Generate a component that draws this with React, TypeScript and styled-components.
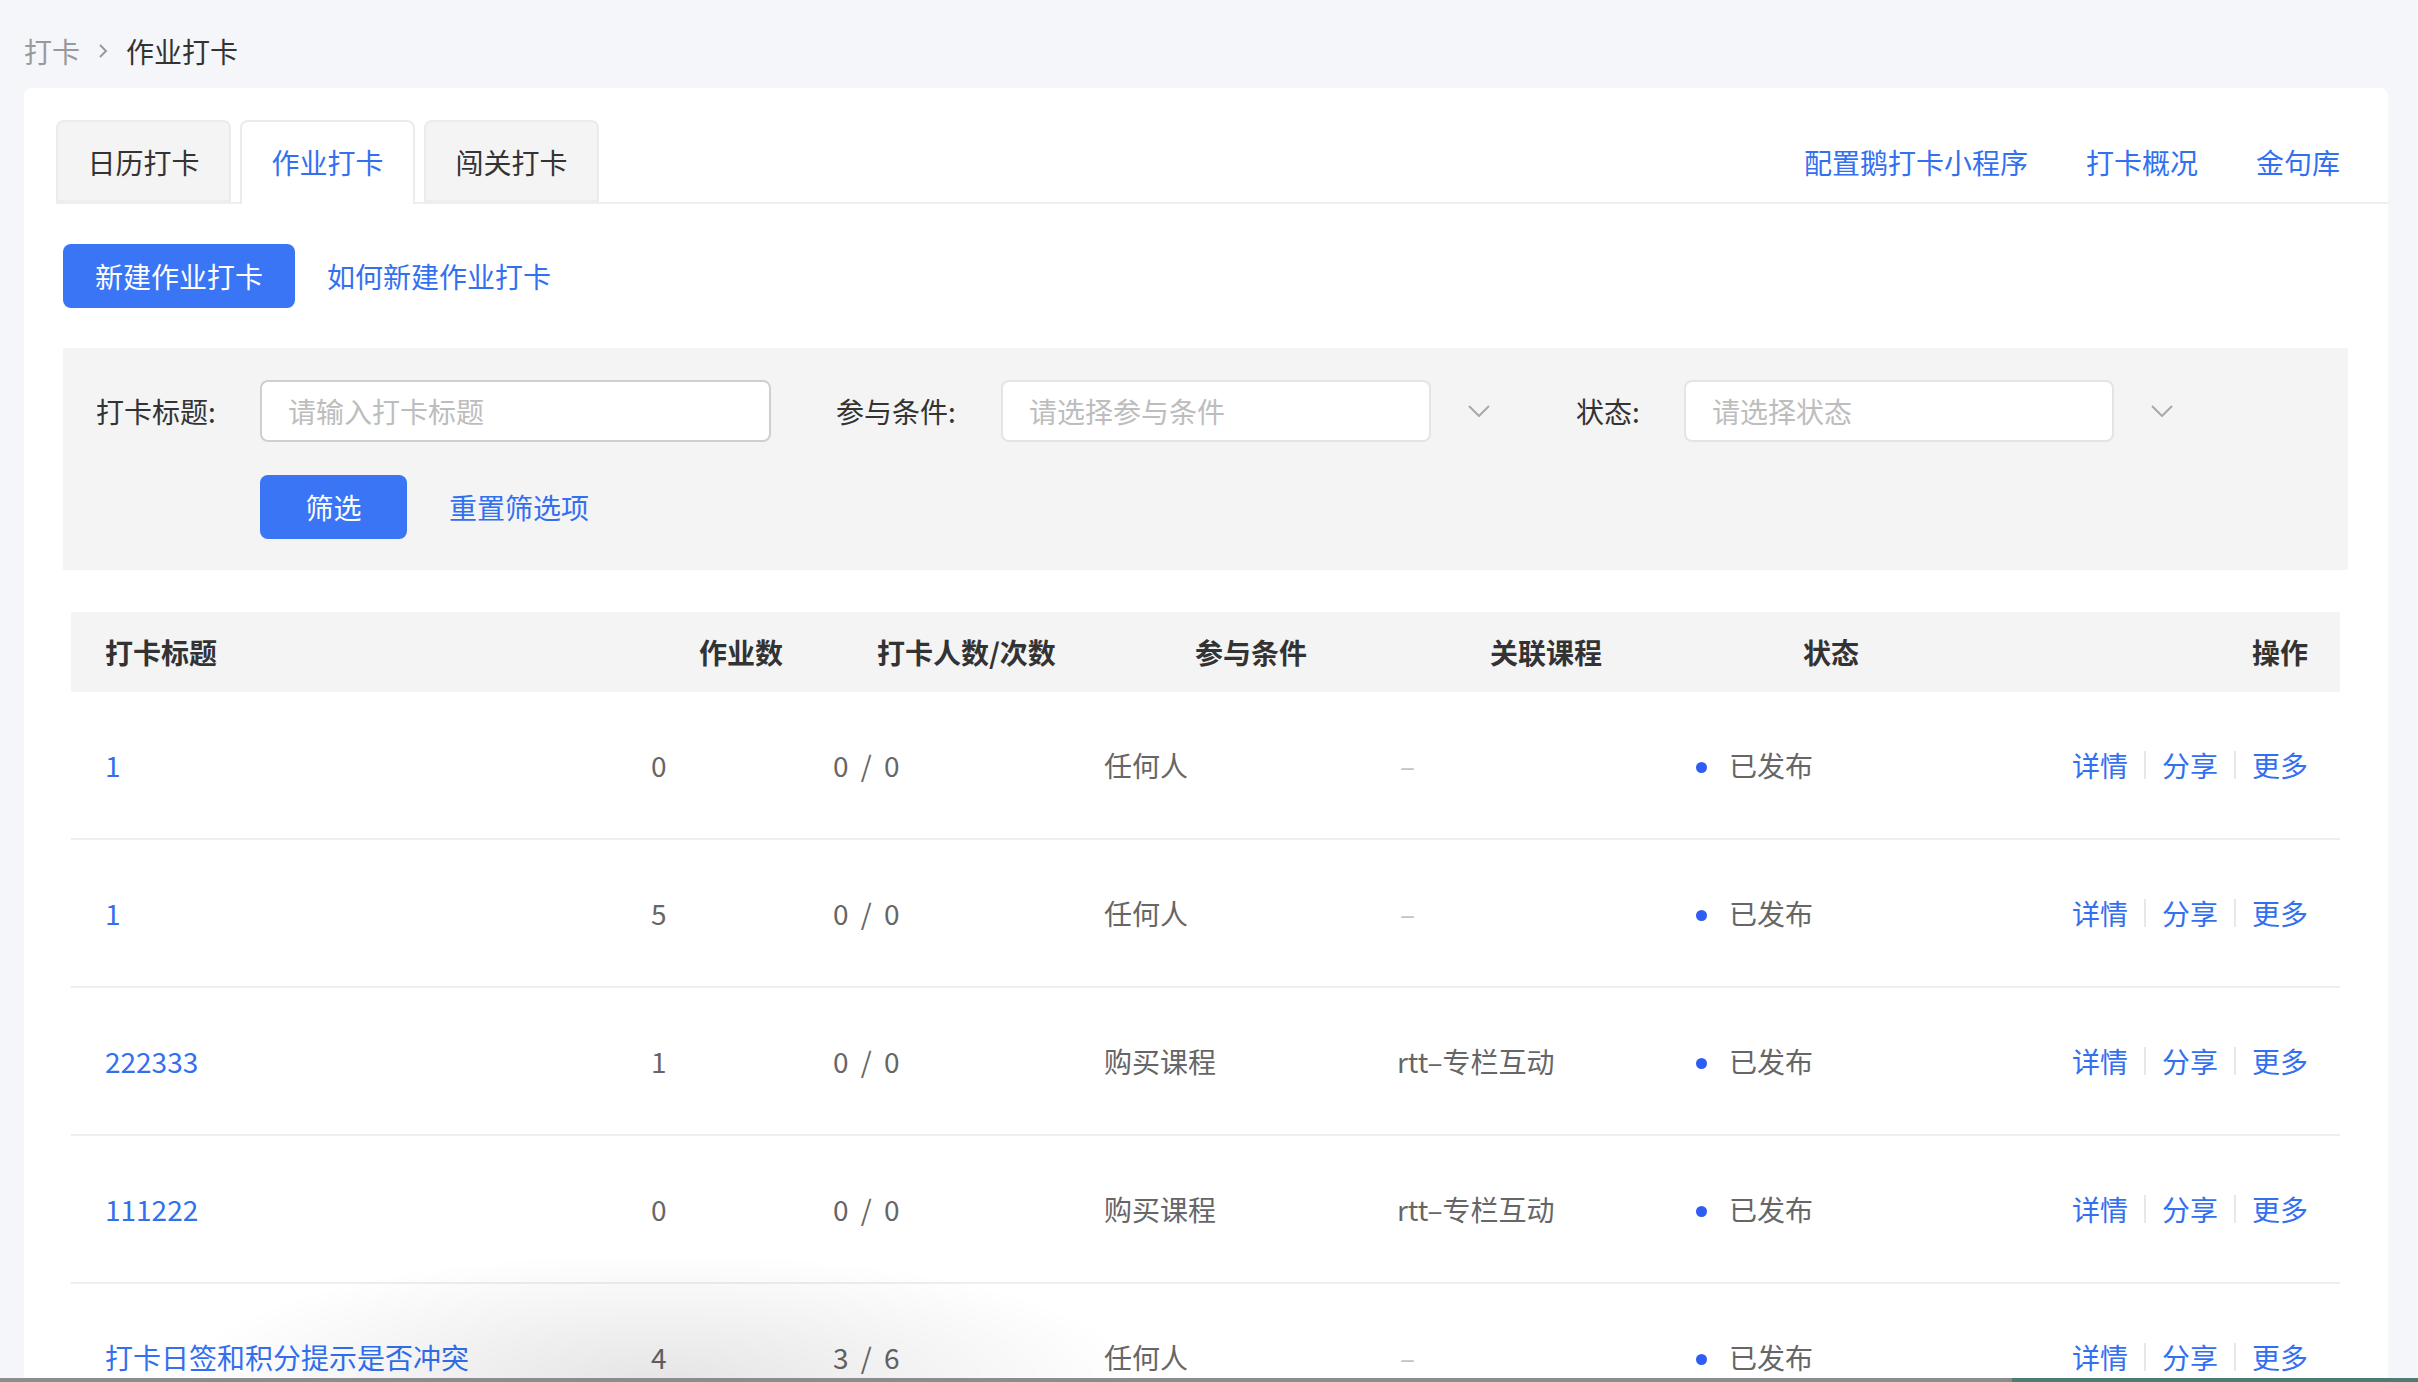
import styled, {createGlobalStyle} from "styled-components";

const GlobalStyle = createGlobalStyle`
  html, body {
    margin: 0;
    padding: 0;
    background: #f5f6f9;
    height: 1382px;
    overflow: hidden;
  }
  body {
    font-family: "Noto Sans CJK SC", "Noto Sans", sans-serif;
    font-size: 28px;
    color: #333;
  }
  * {
    box-sizing: border-box;
  }
`;

const Page = styled.div`
  padding: 0 30px 0 24px;
`;

const Crumbs = styled.div`
  height: 88px;
  padding-top: 14px;
  display: flex;
  align-items: center;
  gap: 18px;
  font-size: 28px;
`;

const Crumb = styled.span<{$current?: boolean}>`
  color: ${(p) => (p.$current ? "#333" : "#999")};
`;

const Card = styled.div`
  background: #fff;
  border-radius: 8px 8px 0 0;
  padding-top: 32px;
  min-height: 1400px;
`;

const TabBar = styled.div`
  display: flex;
  align-items: flex-end;
  margin-left: 32px;
  border-bottom: 2px solid #eeeeee;
`;

const Tabs = styled.div`
  display: flex;
  gap: 9px;
`;

const Tab = styled.div<{$active?: boolean}>`
  width: 175px;
  display: flex;
  align-items: center;
  justify-content: center;
  margin-bottom: -2px;
  border: 2px solid #ebebeb;
  border-bottom: none;
  border-radius: 8px 8px 0 0;
  background: ${(p) => (p.$active ? "#fff" : "#f4f4f4")};
  color: ${(p) => (p.$active ? "#3370f0" : "#333")};
  height: ${(p) => (p.$active ? "84px" : "82px")};
  padding-bottom: ${(p) => (p.$active ? "2px" : "0")};
  box-shadow: ${(p) => (p.$active ? "none" : "inset 0 -2px 0 #eeeeee")};
`;

const TopLinks = styled.div`
  margin-left: auto;
  display: flex;
  gap: 58px;
  padding-right: 48px;
  align-self: center;
  padding-top: 2px;
`;

const TextLink = styled.a`
  color: #3370f0;
  text-decoration: none;
  cursor: pointer;
  white-space: nowrap;
`;

const Content = styled.div`
  padding: 0 40px 0 39px;
`;

const ActionBar = styled.div`
  display: flex;
  align-items: center;
  gap: 32px;
  margin-top: 40px;
`;

const PrimaryButton = styled.button<{$width?: number}>`
  height: 64px;
  width: ${(p) => (p.$width ? `${p.$width}px` : "auto")};
  padding: ${(p) => (p.$width ? "0" : "0 32px")};
  border: none;
  border-radius: 8px;
  background: #3a75f6;
  color: #fff;
  font: inherit;
  font-size: 28px;
  cursor: pointer;
`;

const FilterPanel = styled.div`
  margin-top: 40px;
  background: #f4f4f4;
  padding: 32px 0 31px 33px;
  display: flex;
  flex-direction: column;
  gap: 33px;
`;

const FilterRow = styled.div<{$indent?: number}>`
  display: flex;
  align-items: center;
  padding-left: ${(p) => p.$indent || 0}px;
`;

const Label = styled.label<{$width: number; $gap?: number}>`
  width: ${(p) => p.$width}px;
  margin-left: ${(p) => p.$gap || 0}px;
  color: #333;
  flex-shrink: 0;
`;

const TextInput = styled.input`
  width: 511px;
  height: 62px;
  border: 2px solid #cfcfcf;
  border-radius: 8px;
  background: #fff;
  padding: 0 26px;
  font: inherit;
  font-size: 28px;
  color: #333;
  outline: none;
  &::placeholder {
    color: #bdbdbd;
  }
`;

const SelectBox = styled.div`
  width: 430px;
  height: 62px;
  border: 2px solid #e4e4e4;
  border-radius: 8px;
  background: #fff;
  padding: 0 26px;
  display: flex;
  align-items: center;
  color: #bdbdbd;
`;

const Chevron = styled.svg`
  width: 22px;
  height: 12px;
  margin-left: 37px;
  flex-shrink: 0;
`;

const ResetLink = styled(TextLink)`
  margin-left: 42px;
`;

const Table = styled.div`
  margin: 42px 8px 0;
`;

const headCols = "594px 178px 318px 295px 313px 240px 1fr";
const bodyCols = "546px 182px 271px 293px 302px 300px 1fr";

const HeadRow = styled.div`
  display: grid;
  grid-template-columns: ${headCols};
  align-items: center;
  height: 80px;
  padding: 0 32px 0 34px;
  background: #f4f4f4;
  font-weight: 700;
  color: #333;
`;

const BodyRow = styled.div`
  display: grid;
  grid-template-columns: ${bodyCols};
  align-items: center;
  height: 148px;
  padding: 0 32px 0 34px;
  border-bottom: 2px solid #eeeeee;
  color: #666;
`;

const Cell = styled.div<{$align?: "right"; $spaced?: boolean}>`
  white-space: nowrap;
  text-align: ${(p) => p.$align || "left"};
  word-spacing: ${(p) => (p.$spaced ? "6px" : "normal")};
`;

const Empty = styled.span`
  display: inline-block;
  margin-left: 3px;
  color: #c4c4c4;
  font-size: 28px;
`;

const Status = styled.div`
  display: flex;
  align-items: center;
  margin-left: -3px;
`;

const Dot = styled.span`
  width: 11px;
  height: 11px;
  border-radius: 50%;
  background: #2c5ef5;
  margin-right: 22px;
  margin-top: 4px;
`;

const Ops = styled.div`
  display: flex;
  justify-content: flex-end;
  align-items: center;
`;

const OpDivider = styled.span`
  width: 2px;
  height: 28px;
  background: #e8e8e8;
  margin: 0 16px;
`;

const DockShade = styled.div`
  position: fixed;
  left: 180px;
  bottom: 0;
  width: 960px;
  height: 130px;
  pointer-events: none;
  background: radial-gradient(ellipse 50% 100% at 50% 100%, rgba(0, 0, 0, 0.1), rgba(0, 0, 0, 0) 100%);
`;

const BottomEdge = styled.div`
  position: fixed;
  left: 0;
  right: 0;
  bottom: 0;
  height: 4px;
  background: linear-gradient(to right, #8c8c8c 0, #8c8c8c 2012px, #4e7b74 2012px, #4e7b74 100%);
`;

interface ICheckin {
  title: string;
  tasks: number;
  counts: string;
  condition: string;
  course?: string;
}

const rows: ICheckin[] = [
  {title: "1", tasks: 0, counts: "0 / 0", condition: "任何人"},
  {title: "1", tasks: 5, counts: "0 / 0", condition: "任何人"},
  {title: "222333", tasks: 1, counts: "0 / 0", condition: "购买课程", course: "rtt–专栏互动"},
  {title: "111222", tasks: 0, counts: "0 / 0", condition: "购买课程", course: "rtt–专栏互动"},
  {title: "打卡日签和积分提示是否冲突", tasks: 4, counts: "3 / 6", condition: "任何人"},
];

const DownArrow = () => (
  <Chevron viewBox="0 0 22 12" fill="none">
    <polyline points="1,1 11,11 21,1" stroke="#a8a8a8" strokeWidth="2" />
  </Chevron>
);

const App = () => {
  return (
    <Page>
      <GlobalStyle />
      <Crumbs>
        <Crumb>打卡</Crumb>
        <svg width="10" height="16" viewBox="0 0 10 16" fill="none">
          <polyline points="2,2 8,8 2,14" stroke="#999" strokeWidth="2" />
        </svg>
        <Crumb $current>作业打卡</Crumb>
      </Crumbs>
      <Card>
        <TabBar>
          <Tabs>
            <Tab>日历打卡</Tab>
            <Tab $active>作业打卡</Tab>
            <Tab>闯关打卡</Tab>
          </Tabs>
          <TopLinks>
            <TextLink>配置鹅打卡小程序</TextLink>
            <TextLink>打卡概况</TextLink>
            <TextLink>金句库</TextLink>
          </TopLinks>
        </TabBar>
        <Content>
          <ActionBar>
            <PrimaryButton>新建作业打卡</PrimaryButton>
            <TextLink>如何新建作业打卡</TextLink>
          </ActionBar>
          <FilterPanel>
            <FilterRow>
              <Label $width={164}>打卡标题:</Label>
              <TextInput placeholder="请输入打卡标题" />
              <Label $width={165} $gap={65}>参与条件:</Label>
              <SelectBox>请选择参与条件</SelectBox>
              <DownArrow />
              <Label $width={108} $gap={86}>状态:</Label>
              <SelectBox>请选择状态</SelectBox>
              <DownArrow />
            </FilterRow>
            <FilterRow $indent={164}>
              <PrimaryButton $width={147}>筛选</PrimaryButton>
              <ResetLink>重置筛选项</ResetLink>
            </FilterRow>
          </FilterPanel>
          <Table>
            <HeadRow>
              <Cell>打卡标题</Cell>
              <Cell>作业数</Cell>
              <Cell>打卡人数/次数</Cell>
              <Cell>参与条件</Cell>
              <Cell>关联课程</Cell>
              <Cell>状态</Cell>
              <Cell $align="right">操作</Cell>
            </HeadRow>
            {rows.map((row, i) => (
              <BodyRow key={i}>
                <Cell>
                  <TextLink>{row.title}</TextLink>
                </Cell>
                <Cell>{row.tasks}</Cell>
                <Cell $spaced>{row.counts}</Cell>
                <Cell>{row.condition}</Cell>
                <Cell>{row.course ? row.course : <Empty>–</Empty>}</Cell>
                <Cell>
                  <Status>
                    <Dot />
                    已发布
                  </Status>
                </Cell>
                <Ops>
                  <TextLink>详情</TextLink>
                  <OpDivider />
                  <TextLink>分享</TextLink>
                  <OpDivider />
                  <TextLink>更多</TextLink>
                </Ops>
              </BodyRow>
            ))}
          </Table>
        </Content>
      </Card>
      <DockShade />
      <BottomEdge />
    </Page>
  );
};

export default App;
